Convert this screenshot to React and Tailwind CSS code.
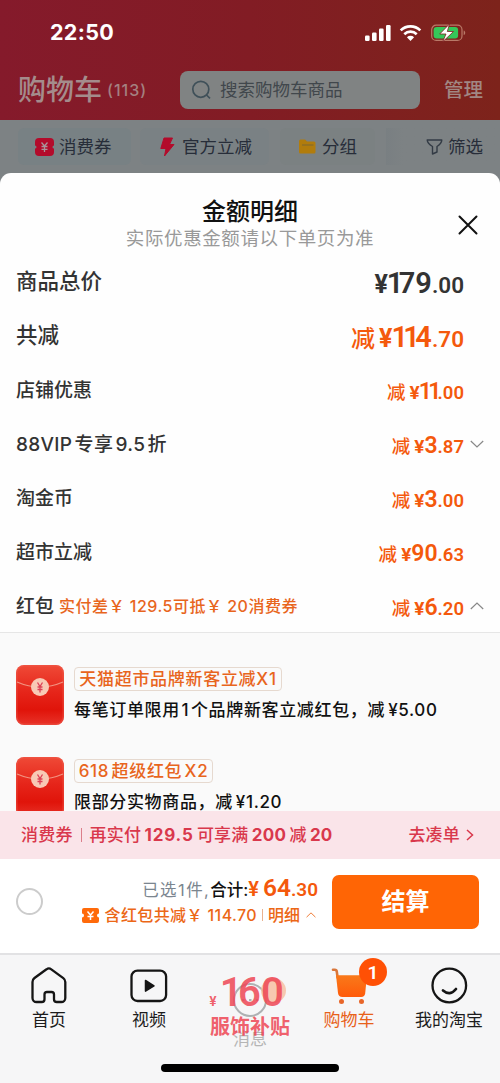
import clsx from "clsx";

const promos = [
  { tag: "天猫超市品牌新客立减X1", tagWidth: "w-[208px]", text: "每笔订单限用 1 个品牌新客立减红包，减", price: "5.00" },
  { tag: "618 超级红包 X2", tagWidth: "w-[139px]", text: "限部分实物商品，减", price: "1.20" },
];

const rows = [
  { label: "商品总价", int: "179", dec: "00", big: true, dark: true },
  { label: "共减", int: "114", dec: "70", big: true },
  { label: "店铺优惠", int: "11", dec: "00" },
  { label: "88VIP 专享 9.5 折", int: "3", dec: "87", arrow: "down" },
  { label: "淘金币", int: "3", dec: "00" },
  { label: "超市立减", int: "90", dec: "63" },
  { label: "红包", int: "6", dec: "20", arrow: "up", note: true },
];

// the "1" is set narrower than the other digits
function Digits({ value }) {
  return value.split("").map((d, i) => (
    <span key={i} className={d === "1" ? "tracking-[-0.16em]" : ""}>
      {d}
    </span>
  ));
}

function Amount({ int, dec, big, dark }) {
  return (
    <div className={clsx("flex items-baseline whitespace-nowrap leading-none", dark ? "text-[#333]" : "text-[#f4590c]")}>
      {!dark && <span className={big ? "mr-[4px] text-[24px] font-medium" : "mr-[4px] text-[18.5px] font-medium"}>减</span>}
      <span className={clsx("font-[Roboto] font-bold", big ? "text-[25px]" : "text-[19px]", int[0] === "1" && "mr-[-1px]")}>¥</span>
      <span className={clsx("font-[Roboto] font-semibold", big ? "text-[29px]" : "text-[23px]")}>
        <Digits value={int} />
      </span>
      <span className={clsx("font-[Roboto] font-semibold", big ? "text-[22.5px]" : "text-[18.5px]")}>.{dec}</span>
    </div>
  );
}

function Chevron({ dir, className }) {
  return (
    <svg viewBox="0 0 14 8" fill="none" stroke="currentColor" strokeWidth="1.2" className={className}>
      <path d={dir === "up" ? "M.8 7 7 1l6.2 6" : "M.8 1 7 7l6.2-6"} />
    </svg>
  );
}

function StatusBar() {
  return (
    <div className="flex h-[66px] items-center justify-between pl-[50px] pr-[34px] text-white">
      <span className="text-[21.5px] font-bold leading-none tracking-[0.3px]">22:50</span>
      <svg width="101" height="18" viewBox="0 0 101 18" fill="#fff">
        <rect x="0" y="11.5" width="4.6" height="5.5" rx="1.2" />
        <rect x="7" y="8.5" width="4.6" height="8.5" rx="1.2" />
        <rect x="14" y="4.5" width="4.6" height="12.5" rx="1.2" />
        <rect x="21" y="1" width="4.6" height="16" rx="1.2" />
        <g fill="none" stroke="#fff" strokeWidth="2.7">
          <path d="M35.7 6.4a14 14 0 0 1 19.6 0" />
          <path d="M39.3 10.2a9 9 0 0 1 12.4 0" />
        </g>
        <path d="m45.5 17 3.6-3.8a5.2 5.2 0 0 0-7.2 0Z" />
        <rect x="66.7" y="1.2" width="30.3" height="15.2" rx="4.5" fill="none" stroke="#b97a68" strokeWidth="1.2" />
        <rect x="68.6" y="3" width="24.5" height="11.6" rx="3" fill="#35c759" />
        <path d="M98.7 6.5c2 .6 2 4 0 4.6Z" fill="#b97a68" />
        <path d="m84.5 0-9.8 10h6.3l-3.3 7.8 10.8-10.3h-6.2Z" stroke="#7f201f" strokeWidth=".8" />
      </svg>
    </div>
  );
}

function Header() {
  return (
    <header className="h-[120px] bg-linear-to-r from-[#851a2b] via-[#821c24] to-[#7d231b]">
      <StatusBar />
      <div className="flex h-[48px] items-center">
        <h1 className="ml-[18px] w-[89px] whitespace-nowrap text-[28px] font-medium leading-none text-[#a48c8c]">购物车</h1>
        <span className="w-[73px] text-[16px] font-medium leading-none tracking-[1px] text-[#a48080]">(113)</span>
        <div className="flex h-[38px] w-[240px] items-center rounded-[8px] bg-[#808383] text-[#41474c]">
          <svg width="22" height="22" viewBox="0 0 22 22" fill="none" stroke="#3f5059" strokeWidth="1.7" className="ml-[10px] mr-[8px]">
            <circle cx="10.8" cy="10.3" r="8" />
            <path d="m16.5 16 3.5 3.3" />
          </svg>
          <span className="whitespace-nowrap text-[17.5px] leading-none">搜索购物车商品</span>
        </div>
        <span className="ml-[24px] whitespace-nowrap pt-[2px] text-[19.5px] font-medium leading-none text-[#a18783]">管理</span>
      </div>
    </header>
  );
}

function Filters() {
  return (
    <div className="flex h-[66px] bg-[#7d8284] pt-[8px] text-[17.5px] leading-none text-[#272d39]">
      <div className="ml-[18px] flex h-[37px] w-[113px] items-center rounded-[6px] bg-[#788184] pl-[17px]">
        <svg width="19" height="18" viewBox="0 0 19 18" className="mr-[5px] shrink-0">
          <path d="M4 0h11q4 0 4 4v3.5a1.5 1.5 0 0 0 0 3V14q0 4-4 4H4q-4 0-4-4v-3.5a1.5 1.5 0 0 0 0-3V4q0-4 4-4Z" fill="#b30b2b" />
          <path d="m6.5 4.500 3 3.500 3-3.500M9.500 8v6M6.500 8.500h6M6.500 11.300h6" stroke="#a9959a" strokeWidth="1.3" fill="none" />
        </svg>
        消费券
      </div>
      <div className="ml-[9px] flex h-[37px] w-[129px] items-center rounded-[6px] bg-[#7a8184] pl-[20px]">
        <svg width="15" height="20" viewBox="0 0 15 20" className="mr-[7px] shrink-0">
          <path d="M4 1h8.5L9.500 7.500H14L4.500 19 6 11.500H.8Z" fill="#b30b2b" stroke="#b30b2b" strokeLinejoin="round" />
        </svg>
        <span className="whitespace-nowrap">官方立减</span>
      </div>
      <div className="ml-[11px] flex h-[37px] w-[95px] items-center rounded-[6px] bg-[#7b8182] pl-[19px]">
        <svg width="17" height="15" viewBox="0 0 17 15" className="mr-[6px] shrink-0">
          <path d="M0 2q0-1.500 1.500-1.500h4.500l2 2h7q1.500 0 1.500 1.500v9q0 1.500-1.500 1.500H1.500Q0 14.500 0 13Z" fill="#b17c0c" />
          <path d="M3 6h11.500" stroke="#846b2c" strokeWidth="1.2" />
        </svg>
        分组
      </div>
      <div className="ml-[11px] flex h-[37px] flex-1 items-center bg-linear-to-r from-[#797f82] to-[#7d8284] to-15% pl-[40px]">
        <svg width="17" height="16" viewBox="0 0 17 16" fill="none" stroke="#333b45" strokeWidth="1.4" className="mr-[5px] shrink-0">
          <path d="M1.200 1h14.600q-.2 3.500-4.800 6.500v5.500l-4.500 2V7.500Q1.500 4.500 1.200 1Z" strokeLinejoin="round" />
        </svg>
        筛选
      </div>
    </div>
  );
}

function Envelope({ id }) {
  return (
    <svg width="48" height="60" viewBox="0 0 48 60" className="shrink-0">
      <defs>
        <linearGradient id={id} x1="0" y1="0" x2="0" y2="1">
          <stop offset="0" stopColor="#ef4a37" />
          <stop offset=".45" stopColor="#e6251a" />
          <stop offset=".75" stopColor="#e0140a" />
          <stop offset="1" stopColor="#e83329" />
        </linearGradient>
      </defs>
      <rect width="48" height="60" rx="8" fill={`url(#${id})`} />
      <rect x=".8" y=".8" width="46.4" height="58.4" rx="7.2" fill="none" stroke="#f0604f" strokeOpacity=".4" strokeWidth="1.6" />
      <path d="M1 17q23 10 46 0" fill="none" stroke="#f29280" strokeWidth="1.3" />
      <circle cx="24" cy="22" r="9" fill="#f8c9b5" />
      <path d="m21.500 17.500 2.500 4 2.500-4M24 21.500v6M21.500 22h5M21.500 24.500h5" fill="none" stroke="#dc4257" strokeWidth="1.3" />
    </svg>
  );
}

function Promo({ tag, tagWidth, text, price, index }) {
  return (
    <div className="flex h-[92px] pl-4">
      <Envelope id={`envelope-${index}`} />
      <div className="ml-[10px] pt-[2px] font-medium">
        <div className={clsx("flex h-[24px] items-center justify-center whitespace-nowrap rounded-[4px] border border-[#e6d9cf] text-[17px] leading-none tracking-[0.7px] [word-spacing:-3px] text-[#e8651d]", tagWidth)}>
          {tag}
        </div>
        <p className="mt-[11px] whitespace-nowrap text-[17px] leading-none tracking-[0.65px] [word-spacing:-3.5px] text-[#111]">
          {text}
          <span className="ml-[3px]">¥{price}</span>
        </p>
      </div>
    </div>
  );
}

function Sheet() {
  return (
    <section className="relative -mt-[13px] h-[638px] overflow-hidden rounded-t-[11px] bg-[#fefefe]">
      <div className="h-[82px] pt-[26px] text-center">
        <h2 className="text-[24px] font-medium leading-[25px] text-[#111]">金额明细</h2>
        <p className="mt-[2px] text-[18.5px] leading-[24px] tracking-[0.6px] text-[#999]">实际优惠金额请以下单页为准</p>
      </div>
      <svg width="20" height="20" viewBox="0 0 20 20" stroke="#111" strokeWidth="2" strokeLinecap="round" className="absolute right-[22px] top-[42px]">
        <path d="m1.500 1.500 17 17M18.500 1.500l-17 17" />
      </svg>
      <div className="h-[378px] border-b border-[#e6e6e6]">
        {rows.map((row, i) => (
          <div key={row.label} className="flex h-[54px] items-center pl-4 text-[#333]">
            <span className={clsx("whitespace-nowrap font-medium leading-none", i < 2 ? "text-[21.5px]" : "text-[19px]", i === 3 && "tracking-[0.3px] [word-spacing:-3px]")}>{row.label}</span>
            {row.note && <span className="ml-[5px] whitespace-nowrap text-[16px] font-medium leading-none tracking-[0.5px] text-[#e8651d]">实付差￥ 129.5可抵￥ 20消费券</span>}
            <div className="ml-auto pt-[2px]">
              <Amount {...row} />
            </div>
            <div className="w-[36px] pl-[6px]">
              {row.arrow && <Chevron dir={row.arrow} className="h-[8px] w-[14px] text-[#888]" />}
            </div>
          </div>
        ))}
      </div>
      <div className="h-[178px] bg-[#fafafa] pt-[32px]">
        {promos.map((promo, i) => (
          <Promo key={promo.tag} {...promo} index={i} />
        ))}
      </div>
    </section>
  );
}

function CouponBar() {
  return (
    <div className="flex h-[48px] items-center bg-[#fae4e9] pl-[21px] pr-[26px] text-[17px] font-medium leading-none tracking-[0.2px] text-[#d9384c]">
      <span className="whitespace-nowrap">消费券</span>
      <i className="mx-[8px] h-[14px] w-px bg-[#dc7f8b]" />
      <span className="whitespace-nowrap [word-spacing:-1.4px]">
        再实付 <b className="tracking-[0.8px]">129.5</b> 可享满 <b>200</b> 减 <b>20</b>
      </span>
      <span className="ml-auto whitespace-nowrap">去凑单</span>
      <svg width="8" height="12" viewBox="0 0 8 12" fill="none" stroke="currentColor" strokeWidth="1.5" className="ml-[6px]">
        <path d="m1 1 5.500 5L1 11" />
      </svg>
    </div>
  );
}

function Checkout() {
  return (
    <div className="flex h-[94px] items-center bg-white pb-[17px] pl-4 pr-[21px]">
      <span className="mt-[8px] size-[27px] shrink-0 rounded-full border-2 border-[#ccc]" />
      <div className="ml-auto mr-[14px] flex flex-col items-end whitespace-nowrap pt-[7px]">
        <div className="flex h-[28px] items-baseline text-[16.5px] leading-[28px] text-[#7b858f]">
          <span className="tracking-[1.4px]">已选1件,</span>
          <span className="font-medium text-[#111]">合计:</span>
          <span className="flex items-baseline font-[Roboto] font-semibold text-[#f4590c]">
            <span className="mr-[4px] text-[20px]">¥</span>
            <span className="text-[24.5px]">64</span>
            <span className="text-[19px]">.30</span>
          </span>
        </div>
        <div className="flex h-[27px] items-center pr-[2px] text-[16px] leading-none text-[#ec6716]">
          <svg width="17" height="15" viewBox="0 0 17 15" className="mr-[5px]">
            <path d="M2 0h13q2 0 2 2v3.500a2 2 0 0 0 0 4v3.500q0 2-2 2H2q-2 0-2-2v-3.500a2 2 0 0 0 0-4V2q0-2 2-2Z" fill="#ff6a0a" />
            <path d="m5.500 3.500 3 3.500 3-3.500M8.500 7v5M5.500 8.500h6" fill="none" stroke="#fff" strokeWidth="1.5" />
          </svg>
          <span className="font-medium tracking-[0.4px]">含红包共减￥ 114.70</span>
          <i className="mx-[5px] h-[12px] w-px bg-[#e9b28f]" />
          <span className="font-medium">明细</span>
          <Chevron dir="up" className="ml-[6px] h-[6px] w-[10px]" />
        </div>
      </div>
      <button className="mt-[8px] h-[54px] w-[147px] rounded-[7px] bg-[#ff6505] text-[24px] font-bold leading-none text-white">结算</button>
    </div>
  );
}

function Tab({ label, orange, children }) {
  return (
    <div className="relative flex w-[100px] flex-col items-center pt-[11px] pr-[2px]">
      {children}
      <span className={clsx("mt-[2px] whitespace-nowrap text-[17px] leading-[24px]", orange ? "text-[#e8611a]" : "text-[#1c1c1c]")}>{label}</span>
    </div>
  );
}

function TabBar() {
  return (
    <nav className="h-[131px] border-t-2 border-[#e2e2e4] bg-[#f6f6f7]">
      <div className="flex h-[109px]">
        <Tab label="首页">
          <svg width="40" height="40" viewBox="0 0 40 40" fill="none" stroke="#151515" strokeWidth="2.3" strokeLinejoin="round">
            <path d="M17.500 3.300a4 4 0 0 1 4.800 0l12 8.800a5 5 0 0 1 2 4V32a4 4 0 0 1-4 4h-4.500a2.800 2.800 0 0 1-2.800-2.800V28.500a2.500 2.500 0 0 0-2.500-2.500h-4.500a2.500 2.500 0 0 0-2.500 2.500v4.700a2.800 2.800 0 0 1-2.800 2.800H7.500a4 4 0 0 1-4-4V16a5 5 0 0 1 2-4Z" />
          </svg>
        </Tab>
        <Tab label="视频">
          <svg width="40" height="40" viewBox="0 0 40 40" fill="none" stroke="#151515" strokeWidth="2.3">
            <rect x="2.500" y="4.600" width="34.600" height="30.400" rx="6" />
            <path d="m16.500 14.500 8.500 5.300-8.500 5.300Z" fill="#151515" strokeWidth="1.5" strokeLinejoin="round" />
          </svg>
        </Tab>
        <div className="relative flex w-[100px] flex-col items-center pt-[18px]">
          <svg width="40" height="50" viewBox="0 0 40 50" fill="none" stroke="#aeb1b3" strokeWidth="2">
            <circle cx="20" cy="27" r="16" />
            <path d="M12 27h2.500M19 27h2.500M26 27h2.500" />
          </svg>
          <span className="mt-[4px] text-[17px] leading-[24px] text-[#b5b5b5]">消息</span>
          <div className="absolute left-[61px] top-[23px] size-[25px] rounded-full bg-[#f8bd9d]/80" />
          <div className="absolute inset-x-0 top-[18px] flex flex-col items-center whitespace-nowrap font-bold leading-none text-[#ee4654]/85">
            <div className="flex items-baseline pr-[7px]">
              <span className="mr-[3px] text-[13px]">¥</span>
              <span className="font-[Roboto] text-[40px] font-semibold leading-[40px]">
                <span className="tracking-[-0.11em]">1</span>60
              </span>
            </div>
            <span className="mt-[4px] text-[20px]">服饰补贴</span>
          </div>
        </div>
        <Tab label="购物车" orange>
          <svg width="40" height="40" viewBox="0 0 40 40">
            <defs>
              <linearGradient id="cart" x1="0" y1="0" x2="0" y2="1">
                <stop offset="0" stopColor="#f9791a" />
                <stop offset="1" stopColor="#ff5b0a" />
              </linearGradient>
            </defs>
            <path d="M4 3.800h1.800q1.700 0 2 1.800l.8 6" fill="none" stroke="#d9773b" strokeWidth="2.6" strokeLinecap="round" />
            <path d="M7 9.300h31l-1.800 18q-.4 3.700-4 3.700H13.500q-4 0-4.500-4Z" fill="url(#cart)" />
            <circle cx="12.500" cy="35.500" r="2.500" fill="#e8662a" />
            <circle cx="32.500" cy="35.500" r="2.500" fill="#e8662a" />
          </svg>
          <span className="absolute left-[59px] top-[3px] flex size-[28px] items-center justify-center rounded-full bg-[#ff5005] font-[Roboto] text-[19px] font-semibold leading-none text-white">1</span>
        </Tab>
        <Tab label="我的淘宝">
          <svg width="40" height="40" viewBox="0 0 40 40" fill="none" stroke="#151515" strokeWidth="2.3">
            <circle cx="20.300" cy="19.500" r="16.800" />
            <path d="M14 24.500q7 6 13-1.500" strokeWidth="2.7" strokeLinecap="round" />
          </svg>
        </Tab>
      </div>
      <div className="mx-auto h-[8px] w-[178px] rounded-full bg-black" />
    </nav>
  );
}

export default function App() {
  return (
    <div className="h-[1083px] w-[500px] overflow-hidden bg-white font-[Inter,'Noto_Sans_CJK_SC',sans-serif]">
      <Header />
      <Filters />
      <Sheet />
      <CouponBar />
      <Checkout />
      <TabBar />
    </div>
  );
}
